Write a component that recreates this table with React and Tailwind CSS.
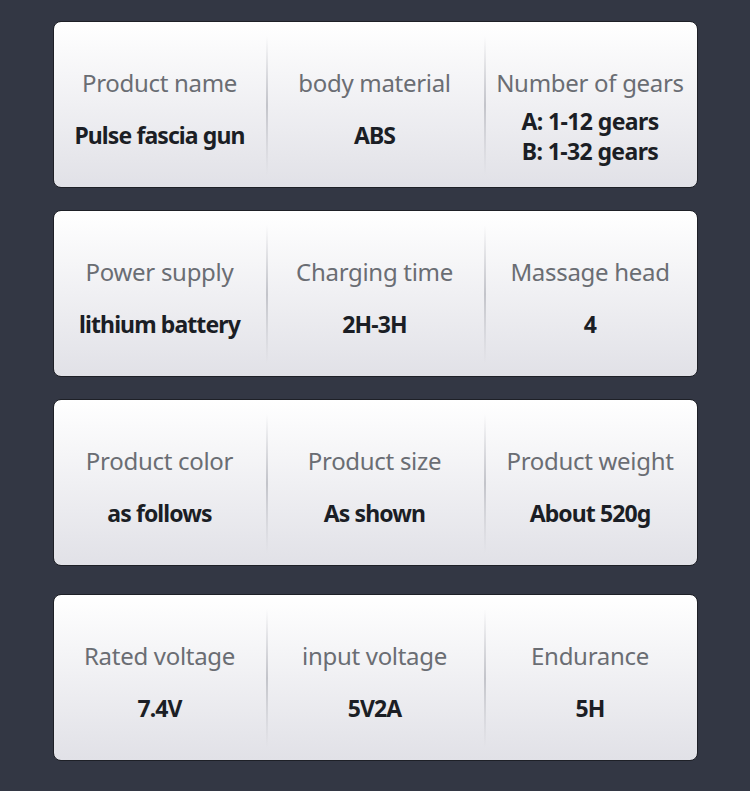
import React from "react";

const cards = [
  { mt: "mt-[21px]", items: [["Product name", ["Pulse fascia gun"]], ["body material", ["ABS"]], ["Number of gears", ["A: 1-12 gears", "B: 1-32 gears"]]] },
  { mt: "mt-[22px]", items: [["Power supply", ["lithium battery"]], ["Charging time", ["2H-3H"]], ["Massage head", ["4"]]] },
  { mt: "mt-[22px]", items: [["Product color", ["as follows"]], ["Product size", ["As shown"]], ["Product weight", ["About 520g"]]] },
  { mt: "mt-[28px]", items: [["Rated voltage", ["7.4V"]], ["input voltage", ["5V2A"]], ["Endurance", ["5H"]]] },
];

function Cell({ label, values, divider }) {
  return (
    <div className="relative flex flex-col items-center h-full">
      {divider && (
        <div className="absolute left-0 top-[14px] bottom-[12px] w-[2px] bg-gradient-to-b from-transparent via-[#c3c4ca] to-transparent" />
      )}
      <div className="mt-[45px] h-[32px] leading-[32px] text-[24px] text-[#6a6d73] tracking-[-0.3px]">{label}</div>
      {values.length === 1 ? (
        <div className="mt-[20px] h-[32px] leading-[32px] text-[23px] font-bold text-[#1b1e25] tracking-[-0.9px]">{values[0]}</div>
      ) : (
        <div className="mt-[7px] flex flex-col items-center">
          {values.map((v) => (
            <div key={v} className="h-[30px] leading-[30px] text-[23px] font-bold text-[#1b1e25] tracking-[-0.6px]">{v}</div>
          ))}
        </div>
      )}
    </div>
  );
}

export default function App() {
  return (
    <div className="w-[750px] h-[791px] bg-[#333744] overflow-hidden flex flex-col items-center" style={{ fontFamily: '"Noto Sans", "Open Sans", sans-serif' }}>
      {cards.map((c, i) => (
        <div key={i} className={`${c.mt} w-[645px] h-[167px] rounded-[8px] border border-[#1e2027] bg-gradient-to-b from-[#ffffff] to-[#e1e1e7] grid grid-cols-[212px_218px_1fr] shrink-0`}>
          {c.items.map(([l, v], j) => (
            <Cell key={j} label={l} values={v} divider={j > 0} />
          ))}
        </div>
      ))}
    </div>
  );
}
